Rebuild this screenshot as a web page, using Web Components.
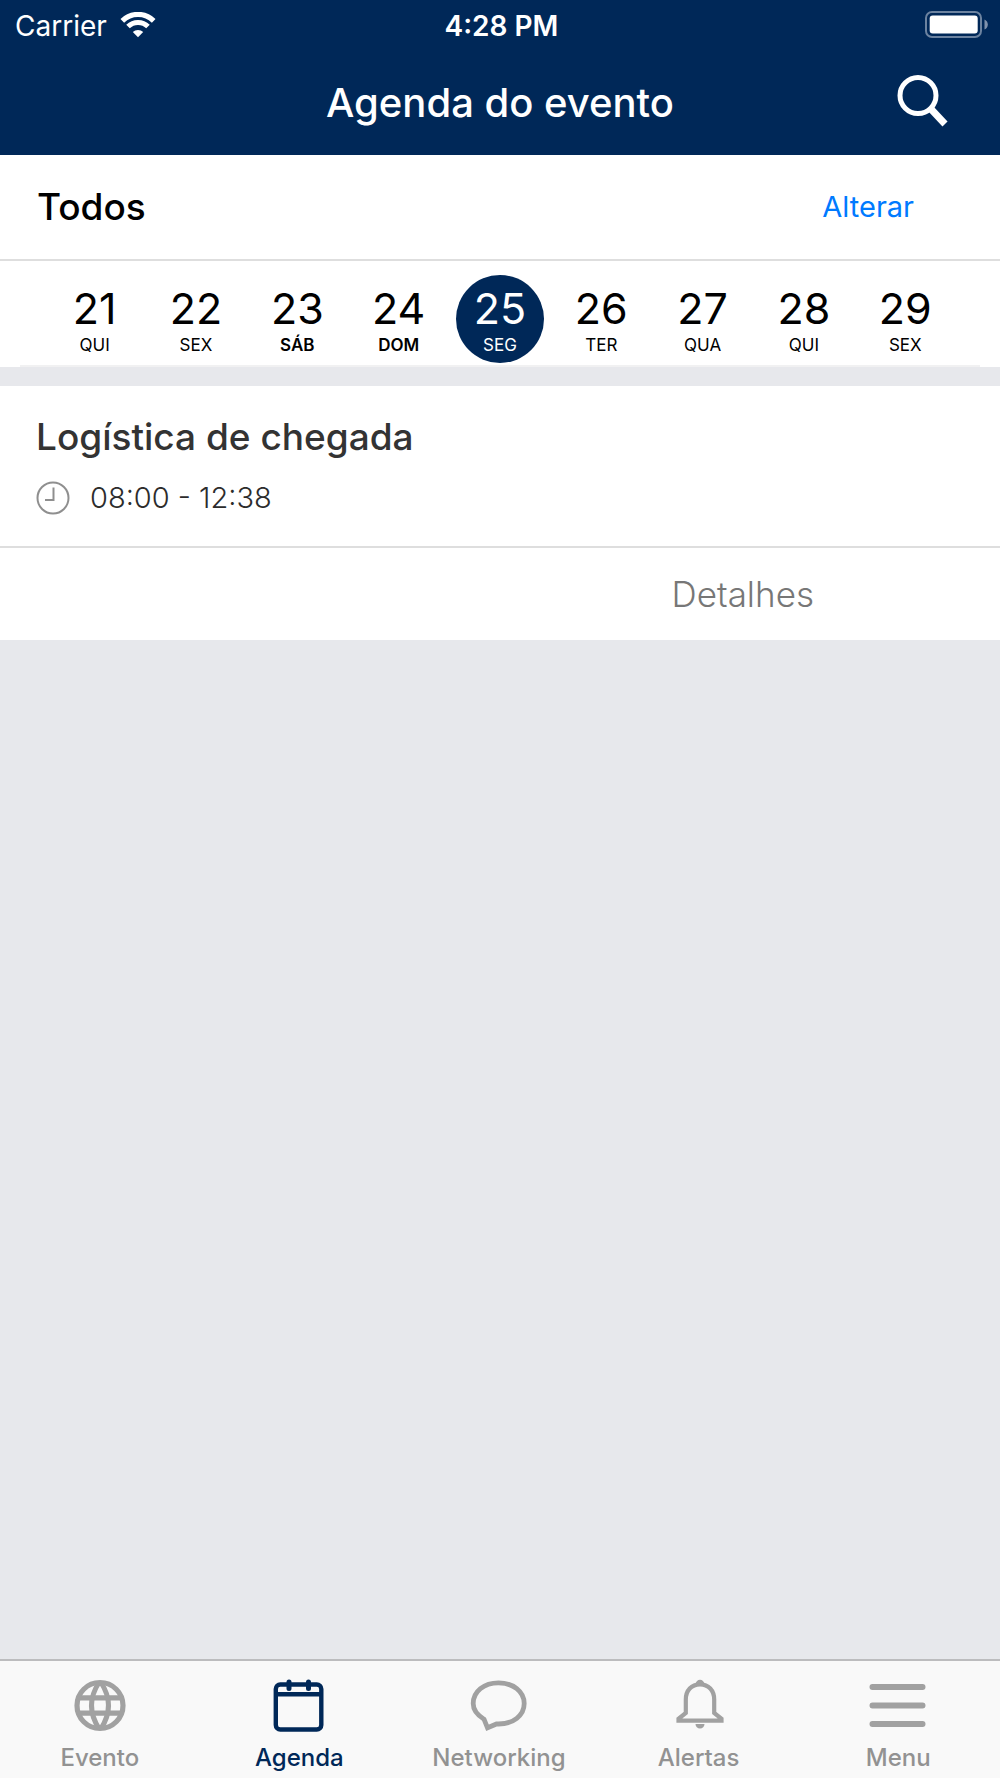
<!DOCTYPE html>
<html lang="pt-BR">
<head>
<meta charset="utf-8">
<meta name="viewport" content="width=device-width, initial-scale=1">
<title>Agenda do evento</title>
<style>
  html, body { margin: 0; }
  body { font-family: Inter, "Liberation Sans", sans-serif; background: #e7e8ec; }
</style>
</head>
<body>
<agenda-app></agenda-app>
<script>
  const define = (name, html) => {
    const template = document.createElement('template');
    template.innerHTML = '<style>*{box-sizing:border-box}button{font:inherit;color:inherit;background:none;border:0;margin:0;padding:0;cursor:pointer}svg{display:block}</style>' + html;
    customElements.define(name, class extends HTMLElement {
      constructor() {
        super();
        this.attachShadow({ mode: 'open' }).append(template.content.cloneNode(true));
      }
    });
  };

  define('status-bar', `
    <style>
      :host { display: grid; grid-template-columns: 1fr auto 1fr; align-items: start; height: 50px; padding: 8px 12px 0 15px; font-size: 28px; line-height: 36px; }
      .network { display: flex; align-items: start; gap: 13px; }
      .network svg { margin-top: 4px; }
      .time { font-weight: 600; }
      .battery { justify-self: end; margin-top: 3px; }
    </style>
    <div class="network"><span>Carrier</span>
      <svg width="36" height="26" viewBox="0 0 36 26" fill="none" stroke="#fff" aria-hidden="true">
        <path d="M2.3 8.8A22.5 22.5 0 0 1 33.7 8.8" stroke-width="5.2"/>
        <path d="M8 14.6A14.2 14.2 0 0 1 28 14.6" stroke-width="5"/>
        <path d="M18 25.3L12.8 20A7.5 7.5 0 0 1 23.2 20Z" fill="#fff" stroke="none"/>
      </svg>
    </div>
    <span class="time">4:28 PM</span>
    <svg class="battery" width="63" height="28" viewBox="0 0 63 28" aria-hidden="true">
      <rect x="1" y="1" width="55" height="25" rx="6" fill="none" stroke="#6c83a0" stroke-width="2"/>
      <rect x="4.7" y="4.5" width="48" height="18" rx="3" fill="#fff"/>
      <path d="M59.5 8.5Q62.8 10 62.8 13.5T59.5 18.5Z" fill="#8092ac"/>
    </svg>
  `);

  define('nav-header', `
    <style>
      :host { display: grid; grid-template-columns: 1fr auto 1fr; align-items: center; height: 105px; padding: 0 50px; }
      h1 { grid-column: 2; margin: 0; font-size: 40px; line-height: 48px; font-weight: 550; }
      button { justify-self: end; }
    </style>
    <h1><slot></slot></h1>
    <button type="button" aria-label="Buscar">
      <svg width="54" height="56" viewBox="0 0 54 56" fill="none" stroke="#fff" aria-hidden="true">
        <circle cx="22" cy="20.5" r="18" stroke-width="5"/>
        <path d="M34 33L49 49" stroke-width="7"/>
      </svg>
    </button>
  `);

  define('filter-bar', `
    <style>
      :host { display: flex; align-items: center; justify-content: space-between; height: 106px; padding: 0 86px 0 37px; background: #fff; border-bottom: 2px solid #dedede; }
      h2 { margin: 0; font-size: 37px; line-height: 46px; font-weight: 500; color: #000; }
      button { font-size: 29px; line-height: 36px; color: #007aff; }
    </style>
    <h2><slot></slot></h2>
    <button type="button">Alterar</button>
  `);

  define('week-strip', `
    <style>
      :host { display: flex; height: 106px; padding: 14px 44px 0; background: linear-gradient(#f1f1f2, #f1f1f2) center bottom / calc(100% - 40px) 2px no-repeat #fff; }
      ::slotted(*) { flex: 1; }
    </style>
    <slot></slot>
  `);

  define('day-button', `
    <style>
      :host { display: flex; justify-content: center; color: #000; }
      button { display: flex; flex-direction: column; align-items: center; gap: 1px; width: 88px; height: 88px; padding-top: 7px; border-radius: 50%; }
      .number { font-size: 43px; line-height: 52px; }
      .name { font-size: 17px; line-height: 20px; }
      :host([weekend]) .name { font-weight: 600; }
      :host([selected]) button { background: #002858; color: #fff; }
    </style>
    <button type="button"><span class="number"><slot></slot></span><span class="name"><slot name="name"></slot></span></button>
  `);

  define('session-card', `
    <style>
      :host { display: block; margin-top: 19px; background: #fff; }
      .info { height: 162px; padding: 28px 36px 0; border-bottom: 2px solid #dedede; }
      h3 { margin: 0; font-size: 37px; line-height: 46px; font-weight: 500; color: #333; }
      .when { display: flex; align-items: center; gap: 20px; margin-top: 20px; font-size: 29px; line-height: 36px; font-weight: 300; color: #2c2c2c; }
      .actions { display: flex; justify-content: flex-end; height: 92px; padding-right: 186px; }
      .actions button { font-size: 35px; line-height: 44px; font-weight: 300; color: #777; }
    </style>
    <div class="info">
      <h3><slot></slot></h3>
      <div class="when">
        <svg width="34" height="34" viewBox="0 0 34 34" fill="none" stroke="#8f8f8f" stroke-width="2" aria-hidden="true">
          <circle cx="17" cy="17" r="15.5"/><path d="M17.5 6.5V19H9"/>
        </svg>
        <slot name="time"></slot>
      </div>
    </div>
    <div class="actions"><button type="button">Detalhes</button></div>
  `);

  define('tab-item', `
    <style>
      :host { display: block; flex: 1; color: #929292; }
      button { display: flex; flex-direction: column; align-items: center; gap: 9px; width: 100%; padding-top: 17px; font-size: 24px; line-height: 30px; font-weight: 500; }
      ::slotted(svg) { display: block; color: #a1a1a1; }
      :host([selected]), :host([selected]) ::slotted(svg) { color: #002858; }
    </style>
    <button type="button"><slot name="icon"></slot><span><slot></slot></span></button>
  `);

  define('tab-bar', `
    <style>
      :host { display: flex; height: 119px; padding-right: 2px; border-top: 2px solid #bcbcbe; background: #f9f9f9; }
    </style>
    <slot></slot>
  `);

  define('agenda-app', `
    <style>
      :host { display: flex; flex-direction: column; min-height: 100vh; }
      header { background: #002858; color: #fff; }
      main { flex: 1; }
    </style>
    <header><status-bar></status-bar><nav-header>Agenda do evento</nav-header></header>
    <main>
      <filter-bar>Todos</filter-bar>
      <week-strip>
        <day-button>21<span slot="name">QUI</span></day-button>
        <day-button>22<span slot="name">SEX</span></day-button>
        <day-button weekend>23<span slot="name">SÁB</span></day-button>
        <day-button weekend>24<span slot="name">DOM</span></day-button>
        <day-button selected>25<span slot="name">SEG</span></day-button>
        <day-button>26<span slot="name">TER</span></day-button>
        <day-button>27<span slot="name">QUA</span></day-button>
        <day-button>28<span slot="name">QUI</span></day-button>
        <day-button>29<span slot="name">SEX</span></day-button>
      </week-strip>
      <session-card>Logística de chegada<span slot="time">08:00 - 12:38</span></session-card>
    </main>
    <tab-bar>
      <tab-item>Evento
        <svg slot="icon" width="58" height="56" viewBox="0 0 58 56" fill="none" stroke="currentColor" stroke-width="5.2" aria-hidden="true">
          <circle cx="29" cy="27.5" r="23"/><path d="M8 19.8H50M8 35.2H50"/>
          <path d="M28 4.5Q13 27.5 28 50.5M30 4.5Q45 27.5 30 50.5" stroke-width="5"/>
        </svg>
      </tab-item>
      <tab-item selected>Agenda
        <svg slot="icon" width="58" height="56" viewBox="0 0 58 56" fill="none" stroke="currentColor" stroke-width="4.4" aria-hidden="true">
          <rect x="5.8" y="6.5" width="45.5" height="45" rx="4.5"/><path d="M6 16.3H51"/><path d="M19 4V10.5M38.5 4V10.5" stroke-width="5" stroke-linecap="round"/>
        </svg>
      </tab-item>
      <tab-item>Networking
        <svg slot="icon" width="58" height="56" viewBox="0 0 58 56" fill="none" stroke="currentColor" stroke-width="4.8" aria-hidden="true">
          <path d="M28.5 4.8C43 4.8 54.2 13.6 54.2 25.6S43 46 28.5 46H26.5L17.5 49.8L14 41.2C7 37 3.2 31.6 3.2 25.6C3.2 13.6 14 4.8 28.5 4.8Z"/>
        </svg>
      </tab-item>
      <tab-item>Alertas
        <svg slot="icon" width="58" height="56" viewBox="0 0 58 56" fill="none" stroke="currentColor" stroke-width="4.2" aria-hidden="true">
          <path d="M8.5 42.7V40.8L15.8 35V21.5C15.8 12.5 21.5 6.3 30 6.3S44.2 12.5 44.2 21.5V35L51.5 40.8V42.7Z"/>
          <path d="M25.8 6A4.2 4.2 0 0 1 34.2 6ZM25.5 46A4.5 4.5 0 0 0 34.5 46Z" fill="currentColor" stroke="none"/>
        </svg>
      </tab-item>
      <tab-item>Menu
        <svg slot="icon" width="58" height="56" viewBox="0 0 58 56" fill="none" stroke="currentColor" stroke-width="6" stroke-linecap="round" aria-hidden="true">
          <path d="M3.5 9H53.5M3.5 27.5H53.5M3.5 46H53.5"/>
        </svg>
      </tab-item>
    </tab-bar>
  `);
</script>
</body>
</html>
